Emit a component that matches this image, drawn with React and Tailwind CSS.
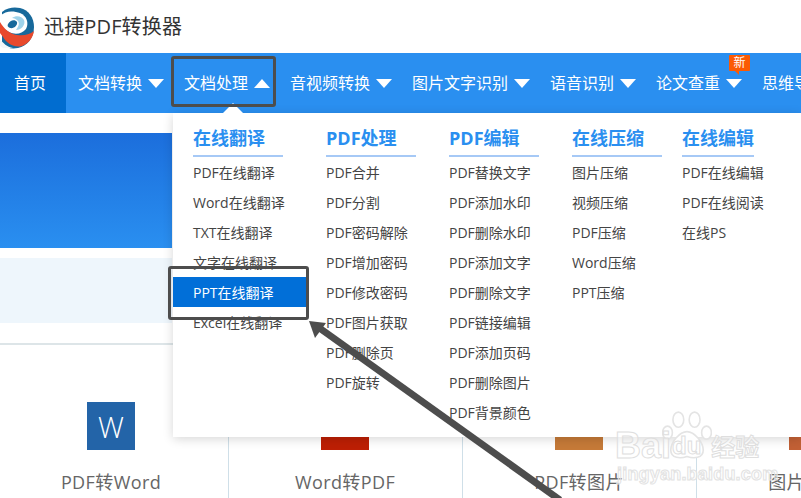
import React from 'react';

const navItems = [
  { label: '文档转换' },
  { label: '文档处理', open: true },
  { label: '音视频转换' },
  { label: '图片文字识别' },
  { label: '语音识别' },
  { label: '论文查重', badge: true },
];

const menuColumns = [
  { title: '在线翻译', width: 'w-[133px]', line: 'w-[90px]', items: ['PDF在线翻译', 'Word在线翻译', 'TXT在线翻译', '文字在线翻译', 'PPT在线翻译', 'Excel在线翻译'] },
  { title: 'PDF处理', width: 'w-[123px]', line: 'w-[90px]', items: ['PDF合并', 'PDF分割', 'PDF密码解除', 'PDF增加密码', 'PDF修改密码', 'PDF图片获取', 'PDF删除页', 'PDF旋转'] },
  { title: 'PDF编辑', width: 'w-[123px]', line: 'w-[90px]', items: ['PDF替换文字', 'PDF添加水印', 'PDF删除水印', 'PDF添加文字', 'PDF删除文字', 'PDF链接编辑', 'PDF添加页码', 'PDF删除图片', 'PDF背景颜色'] },
  { title: '在线压缩', width: 'w-[110px]', line: 'w-[90px]', items: ['图片压缩', '视频压缩', 'PDF压缩', 'Word压缩', 'PPT压缩'] },
  { title: '在线编辑', width: 'w-[100px]', line: 'w-[72px]', items: ['PDF在线编辑', 'PDF在线阅读', '在线PS'] },
];

const cards = [
  { label: 'PDF转Word', color: 'bg-[#2364a8]', mark: 'W' },
  { label: 'Word转PDF', color: 'bg-[#bd1f04]' },
  { label: 'PDF转图片', color: 'bg-[#c67a38]' },
  { label: '图片转PDF', color: 'bg-[#c26035]' },
];

const Caret = ({ up }) => (
  <svg width="16" height="9" viewBox="0 0 16 9" className="ml-1.5 shrink-0">
    <polygon points={up ? '8,0 16,9 0,9' : '0,0 16,0 8,9'} fill="#fff" />
  </svg>
);

const Logo = () => (
  <svg width="36" height="44" viewBox="0 0 36 44" className="shrink-0">
    <path d="M2 7C8 2 15 2 20 3C29 5 34 13 34 22C34 33 27 41 18 43C12 44 6 43 2 40Z" fill="#17699b" />
    <path d="M0 11C6 5 14 6 20 8C27 11 29 18 26 24C22 29 15 30 9 27C5 25 2 22 0 19Z" fill="#fff" />
    <path d="M12 13C16 10 22 11 24 15C26 20 21 25 16 25C18 22 20 19 18 16C16 14 14 13 12 13Z" fill="#9fd3ea" />
    <path d="M8 19C10 15 15 14 17 17C18 20 14 24 10 23C8 22 7 21 8 19Z" fill="#17699b" />
    <path d="M0 17C4 24 10 29 17 30C23 31 29 30 34 26C33 33 28 39 22 41C15 43 7 39 3 32L0 28Z" fill="#e8492c" />
    <path d="M0 34C3 38 7 42 13 43L3 43L0 41Z" fill="#f4f7f9" />
  </svg>
);

const Watermark = () => (
  <div className="pointer-events-none absolute left-[612px] top-[408px] w-[150px]">
    <svg width="50" height="52" viewBox="0 0 46 48" className="absolute left-[50px] top-[3px]" fill="#fff" stroke="#e4e4e4" strokeWidth="1.5">
      <ellipse cx="15" cy="8" rx="5" ry="7" />
      <ellipse cx="30" cy="8" rx="5" ry="7" />
      <ellipse cx="5" cy="20" rx="4.5" ry="6" />
      <ellipse cx="41" cy="20" rx="4.5" ry="6" />
      <path d="M23 19C30 19 38 29 38 36C38 44 29 44 23 42C17 44 8 44 8 36C8 29 16 19 23 19Z" />
    </svg>
    <div className="absolute left-[3px] top-[18px] flex h-[40px] items-center whitespace-nowrap font-['Liberation_Sans',sans-serif] text-[36px] font-bold leading-none text-white/40 [-webkit-text-stroke:1px_#dedede]">
      <span>Bai</span>
      <span className="ml-[1px] text-[24px]">du</span>
      <span className="ml-[10px] font-['Noto_Sans_CJK_SC',sans-serif] text-[24px]">经验</span>
    </div>
    <div className="absolute left-[5px] top-[56px] whitespace-nowrap font-['Liberation_Sans',sans-serif] text-lg font-bold leading-5 tracking-[0.2px] text-white/40 [-webkit-text-stroke:1px_#e2e2e2]">
      jingyan.baidu.com
    </div>
  </div>
);

const App = () => {
  return (
    <div className="relative h-[498px] w-[801px] overflow-hidden bg-white font-['Open_Sans','Noto_Sans_CJK_SC',sans-serif]">
      <header className="flex h-[53px] items-center">
        <Logo />
        <span className="ml-2 text-[20px] tracking-[0.15px] text-[#333]">迅捷PDF转换器</span>
      </header>

      <nav className="flex h-[60px] items-center whitespace-nowrap bg-[#2a8ff0] text-white">
        <div className="flex h-full w-[66px] shrink-0 items-center bg-[#016dd0] pl-[14px] text-base">首页</div>
        <ul className="ml-0.5 flex items-center text-base">
          {navItems.map((item) => (
            <li key={item.label} className="relative flex items-center px-2.5">
              {item.label}
              <Caret up={item.open} />
              {item.badge && (
                <span className="absolute left-[83px] top-[-16px] flex h-4 w-[21px] items-center justify-center rounded-[1px] bg-[#fb5a04] text-xs leading-none">
                  新
                  <span className="absolute left-[6px] top-full h-0 w-0 border-l-[4px] border-t-[4px] border-l-transparent border-t-[#fb5a04]" />
                </span>
              )}
            </li>
          ))}
          <li className="px-2.5">思维导图</li>
        </ul>
      </nav>

      <main>
        <div className="mt-5 h-[115px] w-[172px] bg-gradient-to-b from-[#1c6edc] to-[#2a8ff0]" />
        <div className="mt-2.5 h-[65px] w-[172px] bg-[#eef6fc]" />
        <div className="ml-[-5px] mt-5 flex h-[155px] w-[940px] border-t-2 border-[#dde5e8]">
          {cards.map((card) => (
            <div key={card.label} className="flex w-[234px] shrink-0 flex-col items-center border-r border-[#cfdfe8] pr-px pt-[57px]">
              <div className={`flex h-12 w-12 items-center justify-center text-[29px] font-light leading-none text-white ${card.color}`}>
                {card.mark}
              </div>
              <div className="mt-[20px] text-lg leading-6 tracking-[0.4px] text-[#666]">{card.label}</div>
            </div>
          ))}
        </div>
      </main>

      {/* dropdown for the open tab */}
      <div className="absolute left-[173px] top-[113px] flex h-[324px] w-[628px] bg-white pl-5 shadow-[0_2px_10px_rgba(0,0,0,0.16)]">
        {menuColumns.map((col) => (
          <div key={col.title} className={`shrink-0 ${col.width}`}>
            <div className={`h-[44px] border-b-2 border-[#a6c9f6] pt-[11px] text-lg font-bold leading-7 text-[#2a8ff0] ${col.line}`}>
              {col.title}
            </div>
            <ul className="text-sm text-[#444]">
              {col.items.map((item) => (
                <li
                  key={item}
                  className={item === 'PPT在线翻译'
                    ? 'ml-[-20px] flex h-[30px] w-[133px] items-center bg-[#016fd8] pl-5 pt-px text-white'
                    : 'flex h-[30px] items-center whitespace-nowrap pt-px'}
                >
                  {item}
                </li>
              ))}
            </ul>
          </div>
        ))}
      </div>
      <div className="absolute left-[223px] top-[103px] h-0 w-0 border-x-[10px] border-b-[10px] border-x-transparent border-b-white" />

      <Watermark />

      {/* screenshot annotations */}
      <div className="absolute left-[171px] top-[56px] h-[51px] w-[105px] rounded-[3px] border-[3px] border-[#4d4d4d]" />
      <div className="absolute left-[168px] top-[266px] h-[54px] w-[141px] rounded-[3px] border-[3px] border-[#4d4d4d]" />
      <svg width="801" height="498" viewBox="0 0 801 498" className="pointer-events-none absolute left-0 top-0">
        <line x1="318" y1="327" x2="560" y2="500" stroke="#4d4d4d" strokeWidth="7" />
        <polygon points="309,321 326,323 315,338" fill="#4d4d4d" />
      </svg>
    </div>
  );
};

export default App;
